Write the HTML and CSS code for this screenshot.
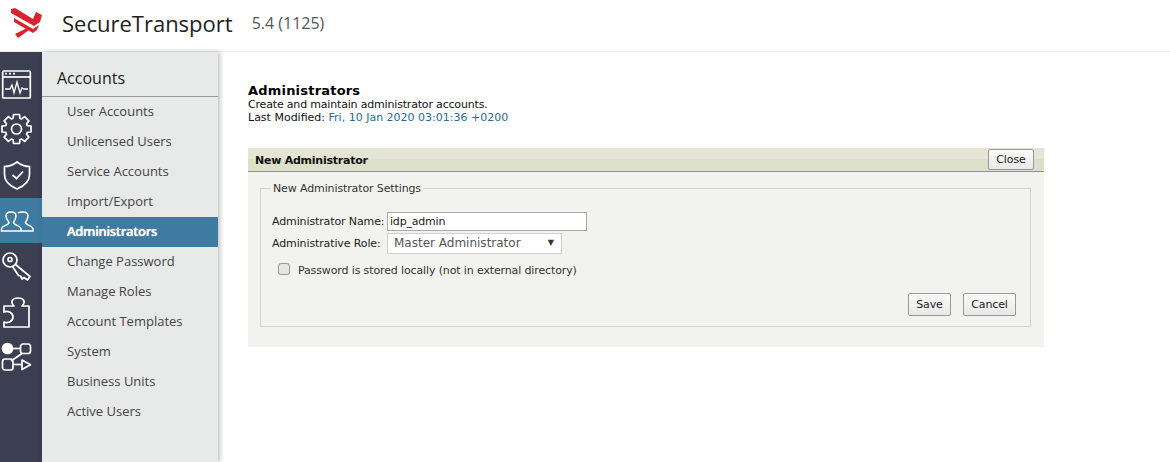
FILE: index.html
```html
<!DOCTYPE html>
<html lang="en">
<head>
<meta charset="UTF-8">
<title>SecureTransport</title>
<link rel="stylesheet" href="styles.css">
</head>
<body>
<header class="topbar">
    <svg class="logo" width="32" height="30" viewBox="0 0 32 30" fill="#d9232e">
        <path d="M0 1L4 0L22 11L25 4L31 7L29 14L23 18L0 5Z"/>
        <path d="M3 10L22 21L28 17L26 22L22 25L3 14Z"/>
        <path d="M4 26L16 20L18 22L7 30Z"/>
    </svg>
    <span class="product">SecureTransport</span>
    <span class="version">5.4 (1125)</span>
</header>
<div class="main">
    <nav class="rail">
        <a class="rail-item">
            <svg width="42" height="36" viewBox="0 0 42 36" fill="none" stroke="#fff" stroke-width="1.7">
                <rect x="2.700" y="3" width="27.600" height="27" rx="1"/>
                <path d="M3 9H30"/>
                <path d="M5 5.700H7M9 5.700H11M13 5.700H15"/>
                <path d="M5 21H10L12 17L14 25L17 14L20 25L22 20L24 21H28" stroke-width="1.300"/>
            </svg>
        </a>
        <a class="rail-item">
            <svg width="42" height="36" viewBox="0 0 42 36" fill="none" stroke="#fff" stroke-width="1.7" stroke-linejoin="round">
                <g transform="translate(16.500 16)">
                    <circle r="5"/>
                    <path d="M-3 -14.500L3 -14.500L3.400 -10.800L5.230 -10.040L8.130 -12.370L12.370 -8.130L10.040 -5.230L10.800 -3.400L14.500 -3L14.500 3L10.800 3.400L10.040 5.230L12.370 8.130L8.130 12.370L5.230 10.040L3.400 10.800L3 14.500L-3 14.500L-3.400 10.800L-5.230 10.040L-8.130 12.370L-12.370 8.130L-10.040 5.230L-10.800 3.400L-14.500 3L-14.500 -3L-10.800 -3.400L-10.040 -5.230L-12.370 -8.130L-8.130 -12.370L-5.230 -10.040L-3.400 -10.800Z"/>
                </g>
            </svg>
        </a>
        <a class="rail-item">
            <svg width="42" height="36" viewBox="0 0 42 36" fill="none" stroke="#fff" stroke-width="1.7">
                <path d="M17 4C21 7 25 8.500 29.500 8.500V17C29.500 24 24 28 17 31C10 28 4.500 24 4.500 17V8.500C9 8.500 13 7 17 4Z"/>
                <path d="M12.500 17L16.500 20.500L23 13.500"/>
            </svg>
        </a>
        <a class="rail-item active">
            <svg width="42" height="36" viewBox="0 0 42 36" fill="none" stroke="#fff" stroke-width="1.5">
                <path d="M1.500 28V26C1.500 23 9 22 9 19.500C7 17 6 15 6 13C6 10 8 9 11 9C14 9 16 10.500 16 13C16 15 15 17 13.500 19.500C13.500 22 21 23 21 26V28Z"/>
                <path d="M18 10C19 9 21 9 23 9C26 9 28 10.500 28 13C28 15 27 17 25.500 19.500C25.500 22 33 23 33 26V28H21"/>
            </svg>
        </a>
        <a class="rail-item">
            <svg width="42" height="36" viewBox="0 0 42 36" fill="none" stroke="#fff" stroke-width="1.7" stroke-linejoin="round">
                <circle cx="10" cy="12" r="7"/>
                <circle cx="10" cy="11.500" r="2"/>
                <path d="M15.500 16.500L30 28.500L27.500 32L24 29.500L22 31L20.500 28L18.500 27.500L12.500 18.500"/>
            </svg>
        </a>
        <a class="rail-item">
            <svg width="42" height="36" viewBox="0 0 42 36" fill="none" stroke="#fff" stroke-width="1.7" stroke-linejoin="round">
                <path d="M4 13H14C10 9 12 5 18 5C24 5 26 9 22 13H29V34H4V29C8 31 13 28 13 24C13 20 8 17 4 19Z"/>
            </svg>
        </a>
        <a class="rail-item">
            <svg width="42" height="36" viewBox="0 0 42 36" fill="none" stroke="#fff" stroke-width="1.7" stroke-linejoin="round">
                <circle cx="7.500" cy="10.500" r="5" fill="#fff"/>
                <path d="M12 10.500H20"/>
                <rect x="20.500" y="6" width="10" height="9.500" rx="2.500"/>
                <path d="M22 15.500L11 23"/>
                <rect x="2.500" y="21" width="10.500" height="11" rx="2.500"/>
                <path d="M13 26.500H22"/>
                <path d="M22 22L30.500 26.750L22 31.500Z"/>
            </svg>
        </a>
    </nav>
    <aside class="subnav">
        <h3 class="subnav-title">Accounts</h3>
        <a class="subnav-link">User Accounts</a>
        <a class="subnav-link">Unlicensed Users</a>
        <a class="subnav-link">Service Accounts</a>
        <a class="subnav-link">Import/Export</a>
        <a class="subnav-link active">Administrators</a>
        <a class="subnav-link">Change Password</a>
        <a class="subnav-link">Manage Roles</a>
        <a class="subnav-link">Account Templates</a>
        <a class="subnav-link">System</a>
        <a class="subnav-link">Business Units</a>
        <a class="subnav-link">Active Users</a>
    </aside>
    <main class="content">
        <h1 class="page-title">Administrators</h1>
        <p class="page-text page-desc">Create and maintain administrator accounts.</p>
        <p class="page-text">Last Modified: <span class="date">Fri, 10 Jan 2020 03:01:36 +0200</span></p>
        <section class="panel">
            <div class="panel-head">
                <span class="panel-title">New Administrator</span>
                <button class="btn btn-close">Close</button>
            </div>
            <div class="panel-body">
                <fieldset class="settings">
                    <legend>New Administrator Settings</legend>
                    <div class="row row-name">
                        <label class="row-label">Administrator Name:</label>
                        <input class="name-input" type="text" value="idp_admin">
                    </div>
                    <div class="row">
                        <label class="row-label">Administrative Role:</label>
                        <div class="role-select">Master Administrator<span class="arrow">▼</span></div>
                    </div>
                    <div class="check-row">
                        <span class="checkbox"></span>
                        <span class="check-text">Password is stored locally (not in external directory)</span>
                    </div>
                    <div class="actions">
                        <button class="btn btn-save">Save</button>
                        <button class="btn btn-cancel">Cancel</button>
                    </div>
                </fieldset>
            </div>
        </section>
    </main>
</div>
</body>
</html>
```

FILE: styles.css
```css
html, body {
    height: 100%;
}
body {
    margin: 0;
    background-color: #fff;
    font-family: "DejaVu Sans", sans-serif;
    font-size: 11px;
    color: #111;
    overflow: hidden;
}
.topbar {
    display: flex;
    align-items: center;
    height: 46px;
    padding-bottom: 5px;
    border-bottom: 1px solid #ececec;
    font-family: "Open Sans", sans-serif;
}
.logo {
    align-self: flex-start;
    margin: 8px 0 0 11px;
}
.product {
    margin-left: 19px;
    font-size: 22px;
    color: #222;
}
.version {
    margin-left: 19px;
    font-size: 16px;
    color: #555;
}
.main {
    display: flex;
    height: 410px;
}
.rail {
    width: 42px;
    padding-top: 11px;
    background-color: #3c3f52;
}
.rail-item {
    display: flex;
    align-items: center;
    height: 45px;
}
.rail-item.active {
    background-color: #3f7aa0;
}
.subnav {
    width: 176px;
    background-color: #e8e9e9;
    box-shadow: 2px 0 5px rgba(0, 0, 0, 0.25);
    font-family: "Open Sans", sans-serif;
}
.subnav-title {
    margin: 0;
    height: 45px;
    padding: 15px 0 0 15px;
    box-sizing: border-box;
    border-bottom: 1px solid #999;
    font-size: 16px;
    font-weight: normal;
    line-height: 22px;
    color: #222;
}
.subnav-link {
    display: block;
    height: 30px;
    padding-left: 25px;
    font-size: 13px;
    line-height: 28px;
    color: #444;
}
.subnav-link.active {
    background-color: #3f7aa0;
    color: #fff;
    font-weight: 600;
    letter-spacing: -0.3px;
    text-shadow: 0 0 1px #fff;
}
.content {
    flex: 1;
    padding: 32px 0 0 30px;
}
.page-title {
    margin: 0;
    font-size: 13px;
    line-height: 14px;
    font-weight: bold;
    letter-spacing: 0.2px;
    color: #000;
}
.page-text {
    margin: 0;
    line-height: 13px;
}
.page-desc {
    letter-spacing: -0.18px;
}
.date {
    color: #2a6a8f;
}
.panel {
    width: 796px;
    margin-top: 24px;
    background-color: #f2f3ee;
}
.panel-head {
    display: flex;
    align-items: center;
    justify-content: space-between;
    height: 23px;
    padding: 0 10px 0 7px;
    border-bottom: 1px solid #8f9a68;
    background: linear-gradient(#e4e5d5 50%, #dcdfc9 50%);
}
.panel-title {
    padding-top: 2px;
    font-weight: bold;
    letter-spacing: -0.24px;
    color: #111;
}
.panel-body {
    padding: 10px 13px 20px 12px;
}
.settings {
    height: 145px;
    box-sizing: border-box;
    margin: 0;
    padding: 15px 14px 0 11px;
    border: 1px solid #d2d2d2;
}
.settings legend {
    padding: 0 2px;
    margin-left: -1px;
    letter-spacing: -0.12px;
    color: #333;
}
.row {
    display: flex;
    align-items: center;
    height: 23px;
}
.row-name {
    height: 22px;
}
.row-label {
    width: 115px;
    letter-spacing: -0.12px;
    color: #222;
}
.name-input {
    width: 200px;
    height: 19px;
    box-sizing: border-box;
    margin: 0;
    padding: 0 2px;
    border: 1px solid #aaa;
    font: 11px "DejaVu Sans", sans-serif;
    letter-spacing: -0.2px;
    color: #222;
}
.role-select {
    position: relative;
    width: 175px;
    height: 21px;
    box-sizing: border-box;
    padding-left: 6px;
    border: 1px solid #d0d0d0;
    background-color: #fff;
    font-size: 12px;
    line-height: 19px;
    color: #555;
}
.arrow {
    position: absolute;
    right: 7px;
    top: -1px;
    font-size: 8px;
    color: #333;
}
.check-row {
    display: flex;
    align-items: center;
    height: 18px;
    margin-top: 5px;
    padding-left: 6px;
    color: #333;
}
.check-text {
    position: relative;
    top: 1px;
    letter-spacing: -0.13px;
}
.checkbox {
    width: 10px;
    height: 10px;
    margin-right: 8px;
    border: 1px solid #999;
    border-radius: 3px;
    background-color: #e6e6e6;
}
.actions {
    display: flex;
    justify-content: flex-end;
    gap: 12px;
    margin-top: 15px;
}
.btn {
    height: 23px;
    padding: 0;
    border: 1px solid #999;
    border-radius: 2px;
    background: linear-gradient(#fafafa, #e9e9e9);
    font: 11px "DejaVu Sans", sans-serif;
    letter-spacing: -0.1px;
    color: #222;
}
.btn-save {
    width: 43px;
}
.btn-cancel {
    width: 53px;
}
.btn-close {
    width: 46px;
    height: 21px;
}
```
